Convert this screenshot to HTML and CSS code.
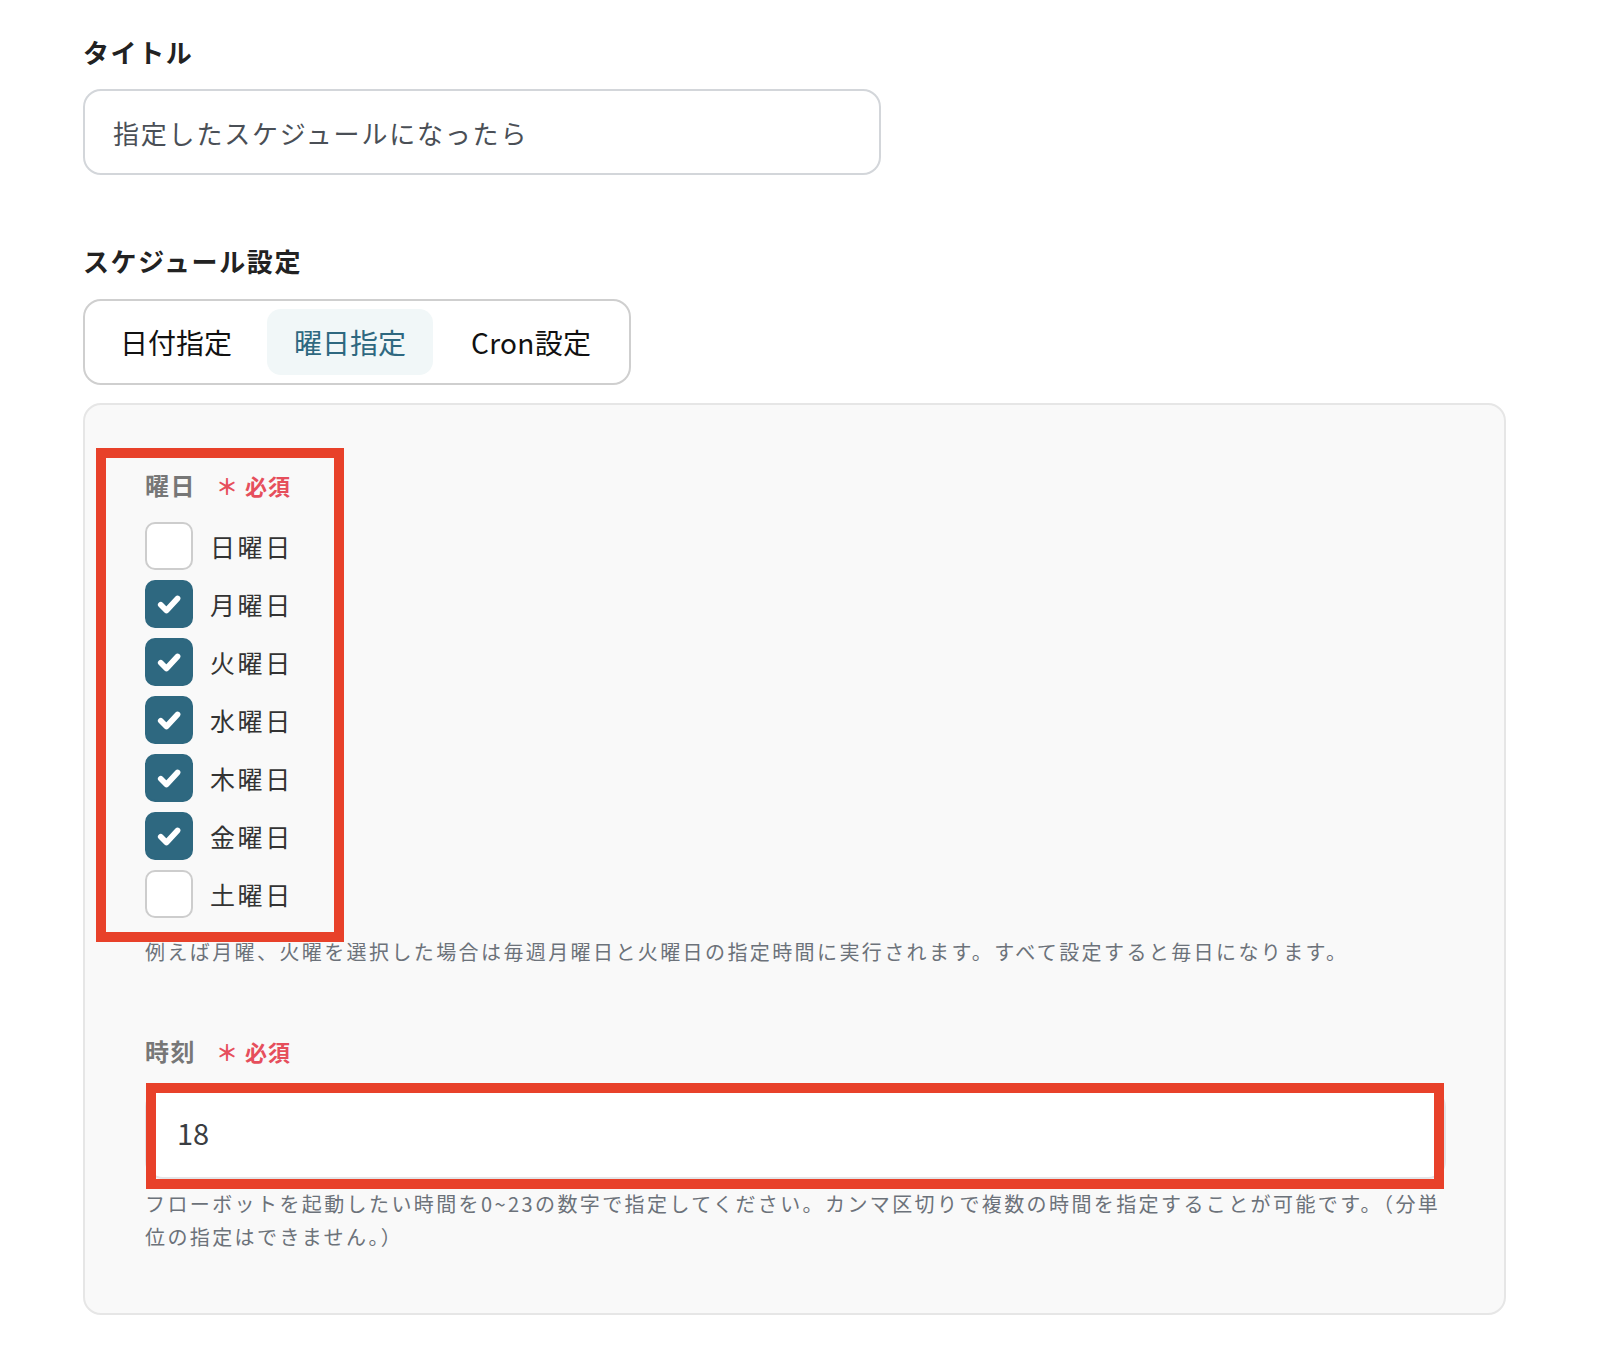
FILE: index.html
```html
<!doctype html>
<html lang="ja">
<head>
  <meta charset="utf-8" />
  <meta name="viewport" content="width=device-width,initial-scale=1" />
  <title>スケジュール設定</title>
  <link rel="stylesheet" href="styles.css">
</head>
<body>
  <div class="page">
    <h2 class="sec-title">タイトル</h2>
    <div class="text-input title-input">指定したスケジュールになったら</div>

    <h2 class="sec-title sched">スケジュール設定</h2>
    <div class="tabs">
      <div class="tab">日付指定</div>
      <div class="tab active">曜日指定</div>
      <div class="tab">Cron設定</div>
    </div>

    <div class="panel">
      <div class="days">
        <div class="field-label">曜日 <span class="req">＊ 必須</span></div>
        <div class="checks">
          <label class="check"><span class="box"></span>日曜日</label>
          <label class="check"><span class="box on"><svg viewBox="0 0 24 24"><path d="M6.5 12.5l3.8 3.8 7.4-8"/></svg></span>月曜日</label>
          <label class="check"><span class="box on"><svg viewBox="0 0 24 24"><path d="M6.5 12.5l3.8 3.8 7.4-8"/></svg></span>火曜日</label>
          <label class="check"><span class="box on"><svg viewBox="0 0 24 24"><path d="M6.5 12.5l3.8 3.8 7.4-8"/></svg></span>水曜日</label>
          <label class="check"><span class="box on"><svg viewBox="0 0 24 24"><path d="M6.5 12.5l3.8 3.8 7.4-8"/></svg></span>木曜日</label>
          <label class="check"><span class="box on"><svg viewBox="0 0 24 24"><path d="M6.5 12.5l3.8 3.8 7.4-8"/></svg></span>金曜日</label>
          <label class="check"><span class="box"></span>土曜日</label>
        </div>
        <div class="mark mark-days"></div>
      </div>
      <p class="help">例えば月曜、火曜を選択した場合は毎週月曜日と火曜日の指定時間に実行されます。すべて設定すると毎日になります。</p>

      <div class="field-label time-label">時刻 <span class="req">＊ 必須</span></div>
      <div class="time-wrap">
        <div class="text-input time-input">18</div>
        <div class="mark mark-time"></div>
      </div>
      <p class="help help2">フローボットを起動したい時間を0~23の数字で指定してください。カンマ区切りで複数の時間を指定することが可能です。（分単位の指定はできません。）</p>
    </div>
  </div>
</body>
</html>
```

FILE: styles.css
```css
:root{--ink:#222;--muted:#6c727a;--teal:#2e6880;--red:#e8412a;--req:#e64f5c;--line:#d3d6da}
*{box-sizing:border-box}
body{margin:0;background:#fff;color:var(--ink);font-family:"Noto Sans CJK JP","Noto Sans",sans-serif}
.page{padding:34px 92px 40px 83px}
.sec-title{margin:0;font-size:26px;line-height:36px;font-weight:700;letter-spacing:1.6px;color:#222}
.sched{margin-top:68px}
.text-input{background:#fff;border:2px solid var(--line);border-radius:18px;display:flex;align-items:center}
.title-input{width:798px;height:86px;margin-top:19px;padding:0 28px;font-size:26px;color:#4a4f56;letter-spacing:1.8px}
.tabs{display:inline-flex;gap:8px;margin-top:20px;padding:8px;border:2px solid #cfcfcf;border-radius:18px;height:86px}
.tab{display:flex;align-items:center;padding:0 27px;border-radius:14px;font-size:28px;color:#111}
.tab.active{background:#f1f7f8;color:var(--teal)}
.tab:last-child{padding:0 30px;letter-spacing:.3px}
.panel{margin-top:18px;background:#f9f9f9;border:2px solid #e6e6e6;border-radius:18px;padding:63px 58px 60px 60px}
.days{position:relative;display:inline-block}
.field-label{font-size:24px;line-height:34px;font-weight:700;letter-spacing:1.5px;color:#777}
.req{margin-left:13px;font-size:22px;letter-spacing:1px;color:var(--req)}
.checks{display:flex;flex-direction:column;gap:10px;margin-top:20px}
.check{display:flex;align-items:center;gap:17px;font-size:25px;letter-spacing:2.6px;color:#333;height:48px}
.box{width:48px;height:48px;border-radius:10px;background:#fff;border:2px solid #cdcdcd;display:flex;align-items:center;justify-content:center}
.box.on{background:var(--teal);border-color:var(--teal)}
.box svg{width:36px;height:36px;fill:none;stroke:#fff;stroke-width:3.8;stroke-linecap:round;stroke-linejoin:round}
.mark{position:absolute;border:10px solid var(--red);pointer-events:none}
.mark-days{top:-20px;left:-49px;width:248px;bottom:-24px}
.help{margin:17px 0 0;font-size:20px;line-height:33px;letter-spacing:2.4px;color:var(--muted)}
.time-label{margin-top:66px}
.time-wrap{position:relative;margin-top:21px}
.time-input{height:90px;padding:0 30px 5px;font-size:29px;color:#3a3d42;border-color:#e3e5e8}
.mark-time{top:-6px;left:1px;right:2px;bottom:-10px}
.help2{margin-top:8px}
```
